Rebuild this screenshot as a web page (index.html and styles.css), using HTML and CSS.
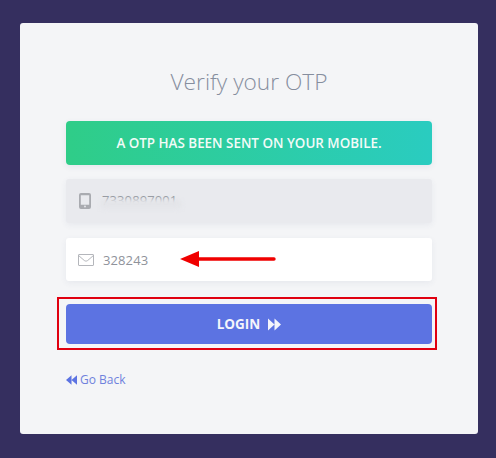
FILE: index.html
```html
<!doctype html>
<html>
<head>
  <link rel="stylesheet" href="styles.css">
</head>
<body>
  <div class="card">
    <h2 class="title">Verify your OTP</h2>
    <div class="alert">A OTP has been sent on your mobile.</div>

    <div class="field field-disabled">
      <svg class="field-icon" width="12" height="16" viewBox="0 0 12 16"><path fill="#a9abb0" d="M2 0h8a2 2 0 0 1 2 2v12a2 2 0 0 1-2 2H2a2 2 0 0 1-2-2V2a2 2 0 0 1 2-2zm-.2 2.2v9.6h8.4V2.2zM6 12.6a.9.9 0 1 0 0 1.8.9.9 0 0 0 0-1.8z" fill-rule="evenodd"/></svg>
      <span class="field-text">7330897001</span>
      <span class="smudge"></span>
    </div>

    <div class="field">
      <svg class="field-icon" width="16" height="12" viewBox="0 0 16 12"><path fill="none" stroke="#b4b6bb" d="M1 .5h14a.5.5 0 0 1 .5.5v10a.5.5 0 0 1-.5.5H1a.5.5 0 0 1-.5-.5V1A.5.5 0 0 1 1 .5zM.7 1.6l5.600 4.900c1 .8 2.400.8 3.400 0l5.600-4.900"/></svg>
      <span class="field-text">328243</span>
      <svg class="arrow" width="96" height="18" viewBox="0 0 96 18"><path fill="#f00000" d="M0 9 19 1v6.300h75a1.700 1.700 0 0 1 0 3.400H19V17z"/></svg>
    </div>

    <button class="login">
      Login
      <svg width="13" height="13" viewBox="0 0 13 13"><path fill="#f4f5fb" d="M0 .5 6.500 6.500 0 12.500zM6.500.5 13 6.500l-6.500 6z"/></svg>
      <span class="login-mark"></span>
    </button>

    <a class="back">
      <svg width="11" height="10" viewBox="0 0 11 10"><path fill="#5c73e2" d="M11 .3 5.500 5 11 9.700zM5.500.3 0 5l5.500 4.700z"/></svg>
      Go Back
    </a>
  </div>
</body>
</html>
```

FILE: styles.css
```css
body {
  margin: 0;
  height: 458px;
  box-sizing: border-box;
  padding: 23px 18px 24px 20px;
  background-color: #352f5f;
  font-family: "Open Sans", sans-serif;
  overflow: hidden;
}
.card {
  height: 411px;
  box-sizing: border-box;
  padding: 49px 46px 0 46px;
  background-color: #f4f5f7;
  border-radius: 3px;
}
.title {
  margin: 0 0 30px 0;
  height: 19px;
  line-height: 19px;
  font-size: 22.7px;
  font-weight: 300;
  color: #868e9e;
  text-align: center;
}
.alert {
  height: 44px;
  line-height: 44px;
  margin-bottom: 14px;
  border-radius: 4px;
  background-image: linear-gradient(to right, #2fcd88, #2accc0);
  box-shadow: 0 2px 6px rgba(60, 70, 110, 0.08);
  color: #f2fbf8;
  font-size: 13.4px;
  font-weight: 600;
  text-align: center;
  text-transform: uppercase;
}
.field {
  position: relative;
  display: flex;
  align-items: center;
  height: 43px;
  margin-bottom: 15px;
  padding-left: 12px;
  border-radius: 3px;
  background-color: #ffffff;
  box-shadow: 0 2px 6px rgba(60, 70, 110, 0.07);
  color: #8f939b;
  font-size: 13px;
}
.field-disabled {
  height: 44px;
  background-color: #e9eaee;
}
.field-disabled .field-icon {
  margin-left: 1px;
  margin-right: 11px;
}
.field-icon {
  margin-right: 9px;
}
.field-text {
  letter-spacing: 0.1px;
}
.field-disabled .field-text {
  margin-top: -2px;
}
.smudge {
  position: absolute;
  left: 34px;
  top: 20px;
  width: 82px;
  height: 10px;
  background-color: #e4e5e9;
  border-radius: 5px;
  filter: blur(2px);
}
.arrow {
  position: absolute;
  left: 114px;
  top: 12px;
}
.login {
  position: relative;
  display: flex;
  align-items: center;
  justify-content: center;
  gap: 8px;
  width: 100%;
  height: 40px;
  margin: 23px 0 0 0;
  border: none;
  border-radius: 4px;
  background-color: #5c73e2;
  color: #f4f5fb;
  font-family: "Open Sans", sans-serif;
  font-size: 13.5px;
  font-weight: 700;
  text-transform: uppercase;
}
.login-mark {
  position: absolute;
  left: -9px;
  right: -5px;
  top: -7px;
  bottom: -6px;
  border: 2px solid #e00010;
}
.back {
  display: flex;
  align-items: center;
  gap: 3px;
  margin-top: 27px;
  color: #6f81dd;
  font-size: 12px;
}
```
